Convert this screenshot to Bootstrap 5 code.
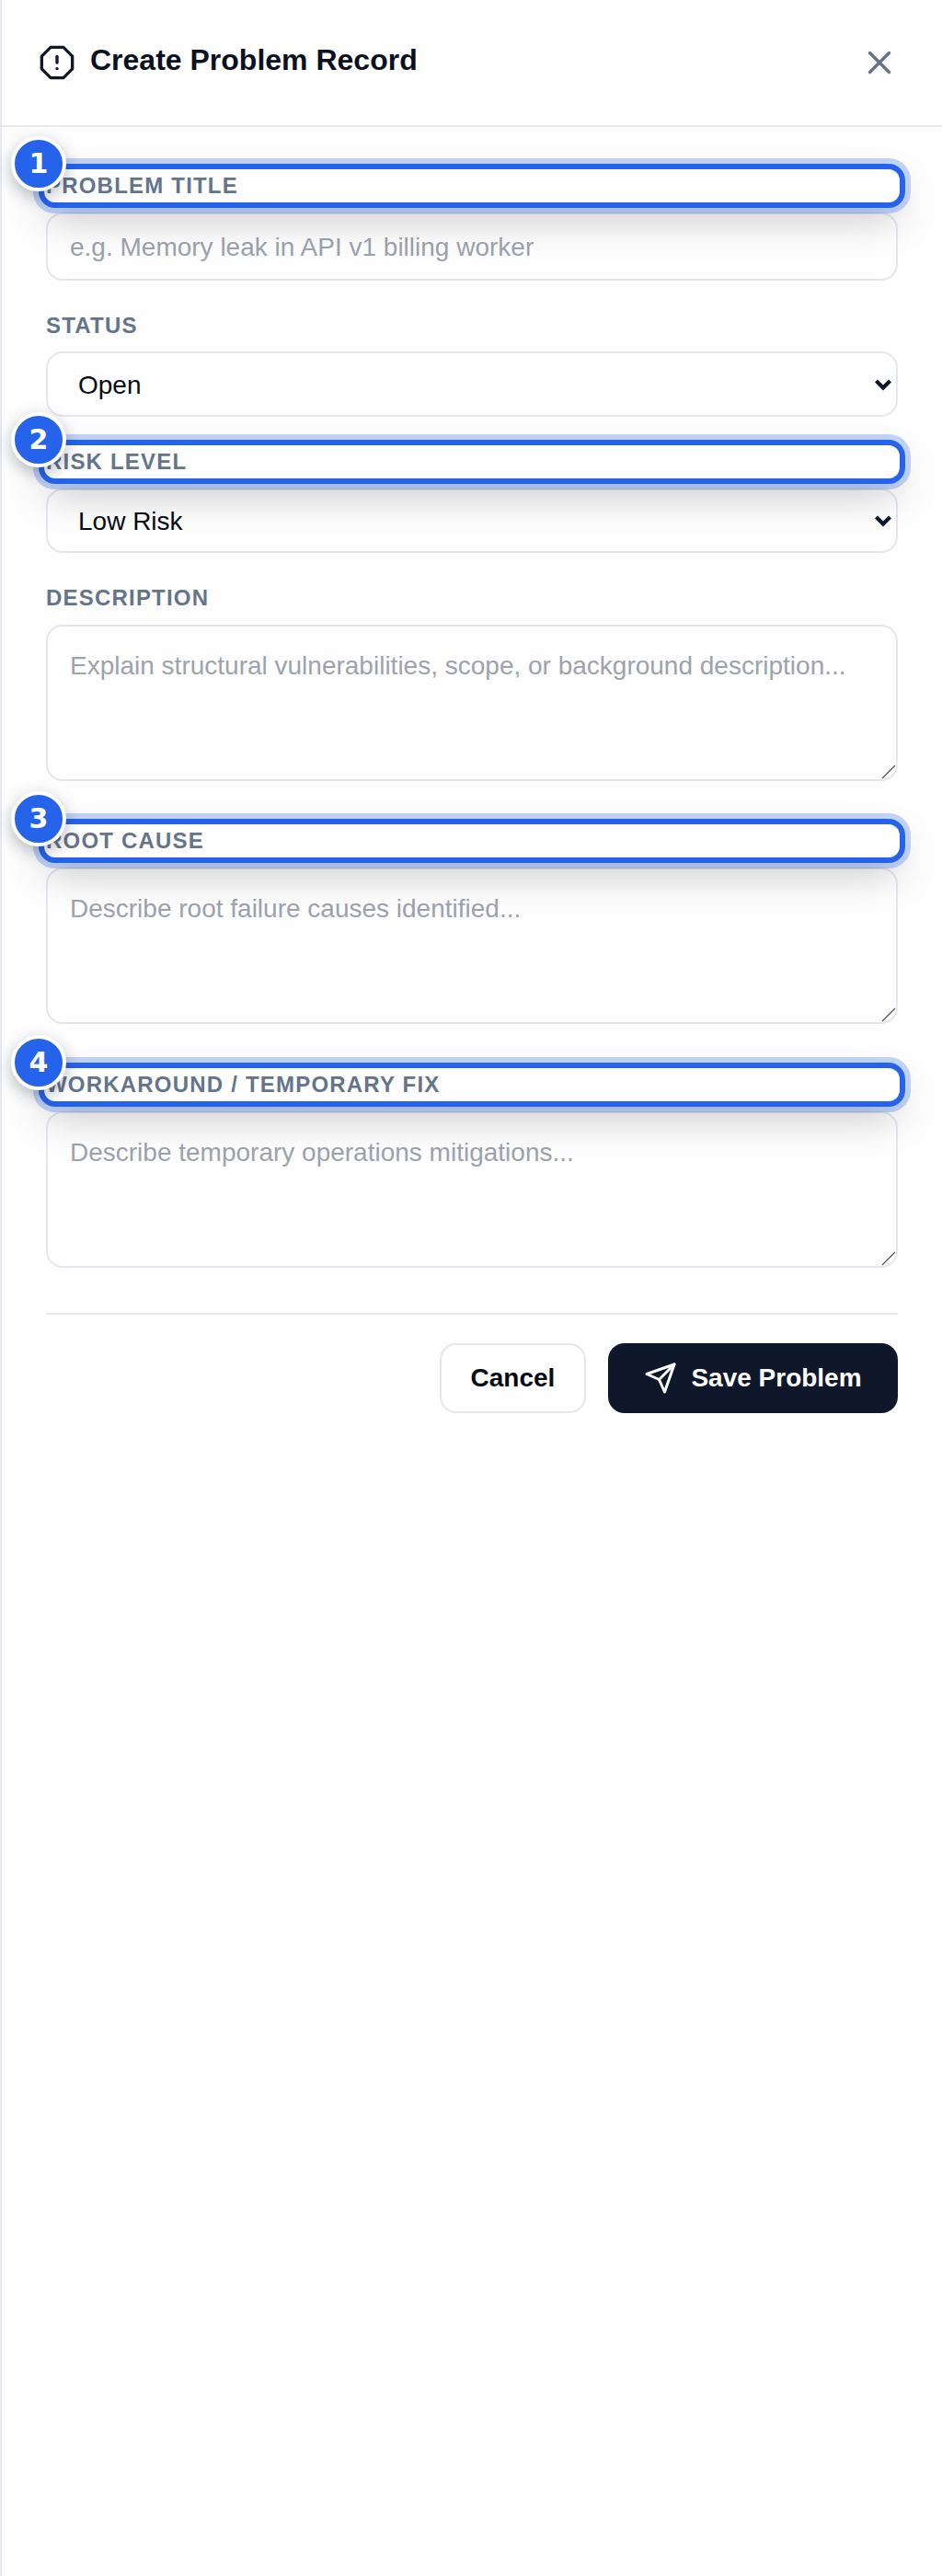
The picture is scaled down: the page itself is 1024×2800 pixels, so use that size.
<!DOCTYPE html>
<html lang="en"><head><meta charset="utf-8">
<link rel="stylesheet" href="https://cdn.jsdelivr.net/npm/bootstrap@5.3.0/dist/css/bootstrap.min.css">
<style>
html,body{background:#fefefe}
body{font-family:"Liberation Sans",Arial,sans-serif;color:#0f172a}
.panel{min-height:2800px;border-left:2px solid #e6e8f5;background:#fefefe}
.panel-head{height:138px;background:#fff;border-bottom:2px solid #e8eaf0;padding:0 47px 0 40px}
.panel-title{font-size:32px;font-weight:700;line-height:1;margin:0 0 6px;color:#0b1120}
.form-wrap{padding:48px 48px 0 48px}
.fgroup{margin-bottom:33px}
.fgroup.tall{margin-bottom:50px}
.fgroup.tall.near{margin-bottom:49px}
.flabel{display:block;position:relative;font-size:24px;line-height:32px;font-weight:700;letter-spacing:1.2px;color:#64748b;margin:0 0 13px;text-transform:uppercase}
.flabel.tight{margin-bottom:12px}
.flabel.spot{z-index:5;background:#fff;border-radius:10px;box-shadow:0 0 0 2px #fff,0 0 0 8px #2563eb,0 0 0 14px rgba(37,99,235,.27),0 18px 44px rgba(0,0,0,.26)}
.pin{position:absolute;left:-38px;top:-38px;width:60px;height:60px;border-radius:50%;background:#2563eb;color:#fff;border:4px solid #fff;font:700 30px/52px "DejaVu Sans",sans-serif;text-align:center;letter-spacing:0;box-shadow:0 6px 18px rgba(15,23,42,.3)}
.fctl.form-control,.fctl.form-select{font-size:28px;line-height:1.2;border:2px solid #e5e7ef;border-radius:18px;color:#060b16;background-color:#fefefe;box-shadow:none}
.fctl::placeholder{color:#9ca3af;opacity:1}
.fctl.in-h{height:74px;padding:2px 24px 0}
.fctl.sel-h{height:70px;padding:2px 24px 0 33px;background-image:url("data:image/svg+xml,%3Csvg xmlns='http://www.w3.org/2000/svg' viewBox='0 0 20 14'%3E%3Cpath d='M2.5 3 10 10.5 17.5 3' fill='none' stroke='%230f172a' stroke-width='4.2'/%3E%3C/svg%3E");background-size:20px 14px;background-position:right 4px center;background-repeat:no-repeat}
.fctl.sel-h.wide{height:71px}
textarea.fctl.form-control{height:170px;padding:26px 24px 0;display:block;resize:none;background-image:url("data:image/svg+xml,%3Csvg xmlns='http://www.w3.org/2000/svg' viewBox='0 0 16 16'%3E%3Cpath d='M1 15 15 1M9 15l6-6' fill='none' stroke='%23555' stroke-width='1.3'/%3E%3C/svg%3E");background-size:16px 16px;background-position:right bottom;background-repeat:no-repeat}
.foot-line{border:0;border-top:2px solid #e5e7ef;margin:0 0 31px;opacity:1}
.btn-ghost,.btn-solid{height:76px;font-size:28px;font-weight:700;border-radius:18px;display:inline-flex;align-items:center;justify-content:center}
.btn-ghost{width:159px;border:2px solid #e5e7ef;background:#fff;color:#060b16}
.btn-solid{width:315px;background:#0f172a;border:0;color:#fff;gap:15px}
</style></head><body>
<div class="panel">
<div class="panel-head d-flex align-items-center justify-content-between">
<div class="d-flex align-items-center gap-3">
<svg width="40" height="40" viewBox="0 0 24 24" fill="none" stroke="#0f172a" stroke-width="2" stroke-linecap="round" stroke-linejoin="round"><polygon points="7.86 2 16.14 2 22 7.86 22 16.14 16.14 22 7.86 22 2 16.14 2 7.86"/><line x1="12" y1="8" x2="12" y2="12"/><line x1="12" y1="16" x2="12.01" y2="16"/></svg>
<h1 class="panel-title">Create Problem Record</h1>
</div>
<svg width="42" height="42" viewBox="0 0 24 24" fill="none" stroke="#64748b" stroke-width="2" stroke-linecap="round" stroke-linejoin="round"><path d="M18 6 6 18"/><path d="m6 6 12 12"/></svg>
</div>
<form class="form-wrap">
<div class="fgroup"><label class="flabel spot"><span class="pin">1</span>Problem Title</label><input class="form-control fctl in-h" placeholder="e.g. Memory leak in API v1 billing worker"></div>
<div class="fgroup"><label class="flabel tight">Status</label><select class="form-select fctl sel-h wide"><option>Open</option></select></div>
<div class="fgroup"><label class="flabel spot"><span class="pin">2</span>Risk Level</label><select class="form-select fctl sel-h"><option>Low Risk</option></select></div>
<div class="fgroup tall near"><label class="flabel">Description</label><textarea class="form-control fctl" placeholder="Explain structural vulnerabilities, scope, or background description..."></textarea></div>
<div class="fgroup tall"><label class="flabel spot"><span class="pin">3</span>Root Cause</label><textarea class="form-control fctl" placeholder="Describe root failure causes identified..."></textarea></div>
<div class="fgroup tall near"><label class="flabel spot"><span class="pin">4</span>Workaround / Temporary Fix</label><textarea class="form-control fctl" placeholder="Describe temporary operations mitigations..."></textarea></div>
<hr class="foot-line">
<div class="d-flex justify-content-end gap-4">
<button type="button" class="btn btn-ghost">Cancel</button>
<button type="button" class="btn btn-solid"><svg width="36" height="36" viewBox="0 0 24 24" fill="none" stroke="#fff" stroke-width="2" stroke-linecap="round" stroke-linejoin="round"><polygon points="22 2 15 22 11 13 2 9 22 2"/><line x1="22" y1="2" x2="11" y2="13"/></svg>Save Problem</button>
</div>
</form>
</div>
<script src="https://cdn.jsdelivr.net/npm/bootstrap@5.3.0/dist/js/bootstrap.bundle.min.js"></script>
</body></html>
